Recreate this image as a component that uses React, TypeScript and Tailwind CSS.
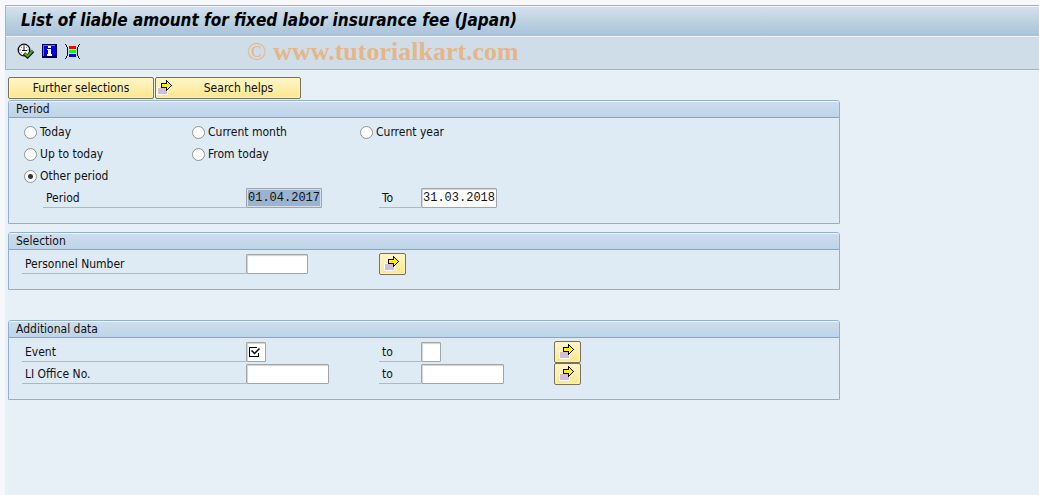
import React, { useState } from "react";
import type { ReactNode } from "react";

const PERIODS = [
  "Today",
  "Current month",
  "Current year",
  "Up to today",
  "From today",
  "Other period",
];

function ExecuteIcon() {
  return (
    <svg width="17" height="16" viewBox="0 0 17 16" fill="none">
      <circle cx="7" cy="7" r="5.8" fill="#fff" stroke="#111" strokeWidth="1.3" />
      <path
        d="M7 2v1.5M2.2 7h1.5M10.3 7h1.5M3.8 3.8l.8.8M10.2 3.8l-.8.8M3.8 10.2l.8-.8"
        stroke="#555"
      />
      <path d="M7 3.5V8M5 7.5h5" stroke="#111" />
      <path d="M7 10.5l3.5 3.2L16 8" stroke="#111" strokeWidth="3.4" />
      <path d="M7.5 10.5l3 2.6L15.3 8" stroke="#4fa51e" strokeWidth="2" />
    </svg>
  );
}

function InfoIcon() {
  return (
    <svg width="15" height="14" viewBox="0 0 15 14" shapeRendering="crispEdges">
      <path fill="#000050" d="M0 0h15v14H0z" />
      <path fill="#5c74f0" d="M1 1h12v1H2v10H1z" />
      <path fill="#0000e8" d="M2 2h11v10H2z" />
      <path fill="#fff" d="M6 2h3v2H6zM5 5h4v5h1v2H5v-2h1V6H5z" />
    </svg>
  );
}

function VariantIcon() {
  return (
    <svg width="15" height="15" viewBox="0 0 15 15" shapeRendering="crispEdges">
      <path
        fill="#111"
        d="M0 0h1v1H0zM1 1h1v2H1zM2 3h1v9H2zM1 12h1v2H1zM0 14h1v1H0zM14 0h1v1h-1zM13 1h1v2h-1zM12 3h1v9h-1zM13 12h1v2h-1zM14 14h1v1h-1z"
      />
      <path fill="#f00" d="M4 2h7v3H4z" />
      <path fill="#0f0" d="M4 6h7v3H4z" />
      <path fill="#00f" d="M4 10h7v3H4z" />
    </svg>
  );
}

function ArrowIcon() {
  return (
    <svg width="15" height="15" viewBox="0 0 15 15" shapeRendering="crispEdges">
      <path fill="#fff" d="M0 7h11v8H0z" />
      <path fill="#d2bddf" d="M1 8h9v6H1z" />
      <path
        fill="#000"
        d="M9 0h1v1h1v1h1v1h1v1h1v1h1v1h-1v1h-1v1h-1v1h-1v1h-1v1H9V8H4V3h5z"
      />
      <path
        fill="#ffee00"
        d="M10 2h1v1h1v1h1v1h1v1h-1v1h-1v1h-1v1h-1V7H5V4h5z"
      />
    </svg>
  );
}

function RequiredIcon() {
  return (
    <svg
      className="pointer-events-none absolute top-1 left-[3px]"
      width="12"
      height="12"
      viewBox="0 0 12 12"
      fill="none"
      stroke="#000"
    >
      <path d="M8 1.5H.5v9h9V7" shapeRendering="crispEdges" />
      <path d="M2.5 4.5l3 3 5-5" strokeWidth="1.5" />
    </svg>
  );
}

function Panel({ title, children }: { title: string; children: ReactNode }) {
  return (
    <section className="w-full max-w-[832px] rounded-t-[3px] border border-[#8fb0d0] bg-[#deeaf4]">
      <h2 className="h-[17px] rounded-t-[2px] border-t border-b border-t-[#eef5fb] border-b-[#86a5c8] bg-linear-to-b from-[#cdddec] to-[#bcd4ea] px-[7px] leading-[14px]">
        {title}
      </h2>
      <div className="pt-[3px] pb-[14px]">{children}</div>
    </section>
  );
}

function FieldLabel({ id, children }: { id: string; children: ReactNode }) {
  return (
    <label
      htmlFor={id}
      className="h-5 border-b border-[#b3b7ba] pl-[3px] leading-5 whitespace-nowrap"
    >
      {children}
    </label>
  );
}

type FieldProps = {
  id: string;
  width: string;
  value?: string;
  required?: boolean;
  selected?: boolean;
};

function Field({ id, width, value = "", required, selected }: FieldProps) {
  return (
    <div className={`relative h-5 ${width}`}>
      <input
        id={id}
        type="text"
        defaultValue={value}
        className={`block h-5 w-full rounded-[1px] border border-[#a2a5a8] px-px font-['Liberation_Mono',monospace] text-xs outline-none ${
          selected
            ? "bg-[#9ab3d1] shadow-[inset_0_0_0_1px_#d5dde6]"
            : "bg-white shadow-[inset_1px_1px_1px_#cfd2d6]"
        }`}
      />
      {required && <RequiredIcon />}
    </div>
  );
}

function MultipleButton({ label }: { label: string }) {
  return (
    <button
      aria-label={label}
      className="flex h-[22px] w-[27px] items-start rounded-[2px] border border-[#77715e] bg-linear-to-b from-[#fff6c9] to-[#fde68c] pt-[2px] pl-1 shadow-[inset_0_0_0_1px_#fff3bd]"
    >
      <ArrowIcon />
    </button>
  );
}

const ROW =
  "grid h-[22px] grid-cols-[224px_133px_42px_133px_27px] items-center pl-[13px]";
const BUTTON =
  "relative flex h-[22px] w-[146px] items-center justify-center rounded-[2px] border border-[#77715e] bg-linear-to-b from-[#fff6c9] to-[#fde68c] shadow-[inset_0_0_0_1px_#fff3bd]";

export default function App() {
  const [period, setPeriod] = useState("Other period");

  return (
    <div className="min-h-screen bg-[#f6f8fc] pt-[5px] pl-[5px] font-['DejaVu_Sans_Condensed','DejaVu_Sans',sans-serif] text-xs text-[#101010]">
      <div className="min-h-[calc(100vh-5px)] bg-[#e8f0f7]">
        <header className="border-t border-b border-l border-[#a3b3c5] bg-[#cfdde8]">
          <div className="flex h-[31px] items-center border-t border-b border-[#eef4f9] bg-linear-to-b from-[#d3e1ee] via-[#bcd2e1] to-[#a9c1dc] pb-1 pl-[15px]">
            <h1 className="text-[17px] leading-6 font-bold whitespace-nowrap text-black italic">
              List of liable amount for fixed labor insurance fee (Japan)
            </h1>
          </div>
          <div className="flex h-8 items-center pl-[11px]">
            <div className="flex w-[230px] items-center gap-2 pb-1">
              <button aria-label="Execute">
                <ExecuteIcon />
              </button>
              <button aria-label="Information">
                <InfoIcon />
              </button>
              <button aria-label="Get variant">
                <VariantIcon />
              </button>
            </div>
            <p className="pb-[3px] font-['Liberation_Serif',serif] text-[26px] leading-7 font-bold whitespace-nowrap text-[#e5b688]">
              <span className="font-normal">©</span> www.tutorialkart.com
            </p>
          </div>
        </header>

        <main className="px-[3px] pt-[7px]">
          <div className="mb-px flex gap-px">
            <button className={BUTTON}>Further selections</button>
            <button className={`${BUTTON} pl-[21px]`}>
              <span className="absolute top-[2px] left-px">
                <ArrowIcon />
              </span>
              Search helps
            </button>
          </div>

          <div className="flex flex-col">
            <Panel title="Period">
              <div className="grid grid-cols-[168px_168px_168px] pl-[15px]">
                {PERIODS.map((name) => (
                  <label
                    key={name}
                    className="flex h-[22px] items-center gap-[3px] last:col-start-1"
                  >
                    <input
                      type="radio"
                      name="period"
                      checked={period === name}
                      onChange={() => setPeriod(name)}
                      className="size-[13px] appearance-none rounded-full border border-[#8f9398] bg-white checked:bg-[radial-gradient(circle,#33353f_0_2px,#fff_3px)]"
                    />
                    {name}
                  </label>
                ))}
              </div>
              <div className="grid h-[22px] grid-cols-[203px_133px_42px_76px] items-center pl-[34px]">
                <FieldLabel id="date-from">Period</FieldLabel>
                <Field id="date-from" width="w-[76px]" value="01.04.2017" selected />
                <FieldLabel id="date-to">To</FieldLabel>
                <Field id="date-to" width="w-[76px]" value="31.03.2018" />
              </div>
            </Panel>

            <div className="mt-2 mb-[30px]">
              <Panel title="Selection">
                <div className={ROW}>
                  <FieldLabel id="personnel">Personnel Number</FieldLabel>
                  <Field id="personnel" width="w-[62px]" />
                  <MultipleButton label="Multiple personnel numbers" />
                </div>
              </Panel>
            </div>

            <Panel title="Additional data">
              <div className={ROW}>
                <FieldLabel id="event-from">Event</FieldLabel>
                <Field id="event-from" width="w-5" required />
                <FieldLabel id="event-to">to</FieldLabel>
                <Field id="event-to" width="w-5" />
                <MultipleButton label="Multiple events" />
              </div>
              <div className={ROW}>
                <FieldLabel id="office-from">LI Office No.</FieldLabel>
                <Field id="office-from" width="w-[83px]" />
                <FieldLabel id="office-to">to</FieldLabel>
                <Field id="office-to" width="w-[83px]" />
                <MultipleButton label="Multiple offices" />
              </div>
            </Panel>
          </div>
        </main>
      </div>
    </div>
  );
}
